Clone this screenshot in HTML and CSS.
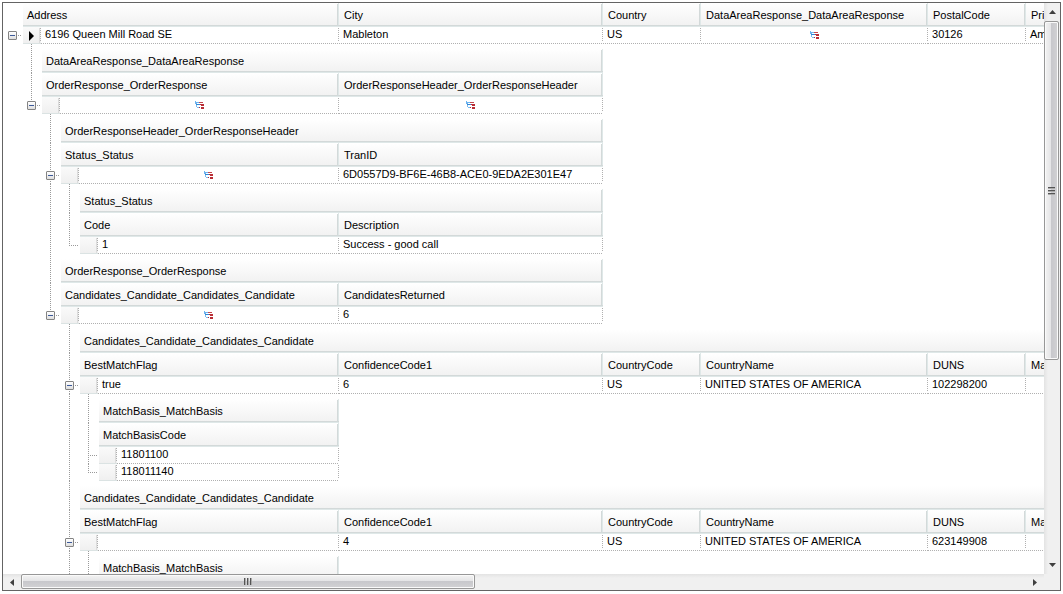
FILE: index.html
```html
<!DOCTYPE html>
<html lang="en">
<head>
    <meta charset="UTF-8">
    <title>Response data</title>
    <link rel="stylesheet" href="styles.css">
</head>
<body>
<svg width="0" height="0" class="defs" aria-hidden="true">
    <symbol id="tree" viewBox="0 0 10 9">
        <path d="M0 0h1v1h3v1H2v1H0z" fill="#6db3ee"/>
        <path d="M1 3h4v1H1z" fill="#2f86d6"/>
        <path d="M1 4h1v2h2v1H2V6H1z" fill="#7cbcf0"/>
        <path d="M4 1h1v1H4zM5 1h3v1H5z" fill="#c4484e"/>
        <path d="M5 3h4v2H6V4H5z" fill="#b92d35"/>
        <path d="M4 6h1v1H4zM6 6h3v2H6z" fill="#b92d35"/>
    </symbol>
</svg>

<div class="grid">
    <div class="view">
        <table class="band level0">
            <colgroup><col class="gut"><col class="sel"><col class="first"><col class="city"><col class="country"><col class="area"><col class="postal"><col class="more"></colgroup>
            <tr>
                <td></td>
                <th colspan="2">Address</th><th>City</th><th>Country</th><th>DataAreaResponse_DataAreaResponse</th><th>PostalCode</th><th>PrimaryAddress</th>
            </tr>
            <tr class="row">
                <td class="node"><button class="toggle" aria-label="Collapse"></button></td>
                <td class="head current"></td>
                <td>6196 Queen Mill Road SE</td><td>Mableton</td><td>US</td><td class="icon"><svg><use href="#tree"/></svg></td><td>30126</td><td>American</td>
            </tr>
            <tr>
                <td></td>
                <td class="child" colspan="7">
                    <table class="band level1">
                        <colgroup><col class="gut"><col class="sel"><col class="first"><col class="city"></colgroup>
                        <tr><td class="line"></td><td class="title" colspan="3"><div>DataAreaResponse_DataAreaResponse</div></td></tr>
                        <tr><td class="line"></td><th colspan="2">OrderResponse_OrderResponse</th><th>OrderResponseHeader_OrderResponseHeader</th></tr>
                        <tr class="row">
                            <td class="node end"><button class="toggle" aria-label="Collapse"></button></td>
                            <td class="head"></td>
                            <td class="icon"><svg><use href="#tree"/></svg></td><td class="icon"><svg><use href="#tree"/></svg></td>
                        </tr>
                        <tr>
                            <td></td>
                            <td class="child" colspan="3">
                                <table class="band level2">
                                    <colgroup><col class="gut"><col class="sel"><col class="first"><col class="city"></colgroup>
                                    <tr><td class="line"></td><td class="title" colspan="3"><div>OrderResponseHeader_OrderResponseHeader</div></td></tr>
                                    <tr><td class="line"></td><th colspan="2">Status_Status</th><th>TranID</th></tr>
                                    <tr class="row">
                                        <td class="node line"><button class="toggle" aria-label="Collapse"></button></td>
                                        <td class="head"></td>
                                        <td class="icon"><svg><use href="#tree"/></svg></td><td>6D0557D9-BF6E-46B8-ACE0-9EDA2E301E47</td>
                                    </tr>
                                    <tr>
                                        <td class="line"></td>
                                        <td class="child" colspan="3">
                                            <table class="band level3">
                                                <colgroup><col class="gut"><col class="sel"><col class="first"><col class="city"></colgroup>
                                                <tr><td class="line"></td><td class="title" colspan="3"><div>Status_Status</div></td></tr>
                                                <tr><td class="line"></td><th colspan="2">Code</th><th>Description</th></tr>
                                                <tr class="row">
                                                    <td class="node end"></td>
                                                    <td class="head"></td>
                                                    <td>1</td><td>Success - good call</td>
                                                </tr>
                                            </table>
                                        </td>
                                    </tr>
                                </table>
                                <table class="band level2">
                                    <colgroup><col class="gut"><col class="sel"><col class="first"><col class="city"></colgroup>
                                    <tr><td class="line"></td><td class="title" colspan="3"><div>OrderResponse_OrderResponse</div></td></tr>
                                    <tr><td class="line"></td><th colspan="2">Candidates_Candidate_Candidates_Candidate</th><th>CandidatesReturned</th></tr>
                                    <tr class="row">
                                        <td class="node end"><button class="toggle" aria-label="Collapse"></button></td>
                                        <td class="head"></td>
                                        <td class="icon"><svg><use href="#tree"/></svg></td><td>6</td>
                                    </tr>
                                    <tr>
                                        <td></td>
                                        <td class="child" colspan="3">
                                            <table class="band level3">
                                                <colgroup><col class="gut"><col class="sel"><col class="first"><col class="city"><col class="country"><col class="area"><col class="postal"><col class="more"></colgroup>
                                                <tr><td class="line"></td><td class="title" colspan="7"><div>Candidates_Candidate_Candidates_Candidate</div></td></tr>
                                                <tr><td class="line"></td><th colspan="2">BestMatchFlag</th><th>ConfidenceCode1</th><th>CountryCode</th><th>CountryName</th><th>DUNS</th><th>MatchBasis</th></tr>
                                                <tr class="row">
                                                    <td class="node line"><button class="toggle" aria-label="Collapse"></button></td>
                                                    <td class="head"></td>
                                                    <td>true</td><td>6</td><td>US</td><td>UNITED STATES OF AMERICA</td><td>102298200</td><td></td>
                                                </tr>
                                                <tr>
                                                    <td class="line"></td>
                                                    <td class="child" colspan="7">
                                                        <table class="band level4">
                                                            <colgroup><col class="gut"><col class="sel"><col class="first"></colgroup>
                                                            <tr><td class="line"></td><td class="title" colspan="2"><div>MatchBasis_MatchBasis</div></td></tr>
                                                            <tr><td class="line"></td><th colspan="2">MatchBasisCode</th></tr>
                                                            <tr class="row"><td class="node line"></td><td class="head"></td><td>11801100</td></tr>
                                                            <tr class="row"><td class="node end"></td><td class="head"></td><td>118011140</td></tr>
                                                        </table>
                                                    </td>
                                                </tr>
                                            </table>
                                            <table class="band level3">
                                                <colgroup><col class="gut"><col class="sel"><col class="first"><col class="city"><col class="country"><col class="area"><col class="postal"><col class="more"></colgroup>
                                                <tr><td class="line"></td><td class="title" colspan="7"><div>Candidates_Candidate_Candidates_Candidate</div></td></tr>
                                                <tr><td class="line"></td><th colspan="2">BestMatchFlag</th><th>ConfidenceCode1</th><th>CountryCode</th><th>CountryName</th><th>DUNS</th><th>MatchBasis</th></tr>
                                                <tr class="row">
                                                    <td class="node line"><button class="toggle" aria-label="Collapse"></button></td>
                                                    <td class="head"></td>
                                                    <td></td><td>4</td><td>US</td><td>UNITED STATES OF AMERICA</td><td>623149908</td><td></td>
                                                </tr>
                                                <tr>
                                                    <td class="line"></td>
                                                    <td class="child" colspan="7">
                                                        <table class="band level4">
                                                            <colgroup><col class="gut"><col class="sel"><col class="first"></colgroup>
                                                            <tr><td class="line"></td><td class="title" colspan="2"><div>MatchBasis_MatchBasis</div></td></tr>
                                                        </table>
                                                    </td>
                                                </tr>
                                            </table>
                                        </td>
                                    </tr>
                                </table>
                            </td>
                        </tr>
                    </table>
                </td>
            </tr>
        </table>
    </div>

    <div class="bar vertical">
        <button class="arrow" aria-label="Scroll up"><svg width="7" height="4"><path d="M0 4L3.500 0L7 4z"/></svg></button>
        <div class="thumb"><span class="grip"></span></div>
        <div class="track"></div>
        <button class="arrow" aria-label="Scroll down"><svg width="7" height="4"><path d="M0 0h7L3.500 4z"/></svg></button>
    </div>
    <div class="bar horizontal">
        <button class="arrow" aria-label="Scroll left"><svg width="4" height="7"><path d="M4 0v7L0 3.500z"/></svg></button>
        <div class="thumb"><span class="grip"></span></div>
        <div class="track"></div>
        <button class="arrow" aria-label="Scroll right"><svg width="4" height="7"><path d="M0 0v7L4 3.500z"/></svg></button>
    </div>
    <div class="corner"></div>
</div>
</body>
</html>
```

FILE: styles.css
```css
* { box-sizing: border-box; }
body { margin: 0; padding: 2px 2px 3px 2px; height: 100vh; background: #fff; color: #000; font: 11px/14px "Liberation Sans", Arial, sans-serif; }
button { padding: 0; border: none; background: none; }
.defs { position: absolute; }

.grid { display: grid; grid-template-columns: minmax(0, 1fr) 16px; grid-template-rows: minmax(0, 1fr) 16px; height: 100%; border: 1px solid #646464; }
.view { overflow: hidden; padding-left: 1px; }

/* bands */
.band { width: 1px; table-layout: fixed; border-collapse: separate; border-spacing: 0; }
.band td, .band th { padding: 0; white-space: nowrap; text-align: left; font-weight: normal; vertical-align: top; }
.gut { width: 19px; }
.sel { width: 18px; }
.level0 > colgroup > .first { width: 298px; }
.level1 > colgroup > .first { width: 279px; }
.level2 > colgroup > .first { width: 260px; }
.level3 > colgroup > .first { width: 241px; }
.level4 > colgroup > .first { width: 222px; }
.city { width: 264px; }
.country { width: 98px; }
.area { width: 227px; }
.postal { width: 98px; }
.more { width: 160px; }

.band th, .title div { height: 24px; line-height: 20px; background:
    linear-gradient(#dfe8e8, #dfe8e8) 0 100% / 100% 1px no-repeat,
    linear-gradient(#d3d9d9, #d3d9d9) 0 22px / 100% 1px no-repeat,
    linear-gradient(#dfe8e8, #dfe8e8) 100% 0 / 1px 100% no-repeat,
    linear-gradient(#d3d9d9, #d3d9d9) right 1px top 1px / 1px 22px no-repeat,
    linear-gradient(#fff, #f1f1f1); }
.band th { padding: 2px 0 0 4px; }
.band th + th { padding-left: 5px; }
.title div { padding: 2px 0 0 4px; }
.band .title { padding-top: 5px; }

/* rows */
.row { height: 17px; }
.band .row td { height: 17px; padding-left: 4px; background:
    repeating-linear-gradient(to right, #b0b0b0 0 1px, transparent 1px 2px) 0 100% / 100% 1px no-repeat,
    repeating-linear-gradient(#b0b0b0 0 1px, transparent 1px 2px) 100% 1px / 1px 13px no-repeat; }
.band .row .head { padding: 0; background:
    repeating-linear-gradient(#b0b0b0 0 1px, transparent 1px 2px) 100% 1px / 1px 13px no-repeat,
    linear-gradient(#dbe3e3, #dbe3e3) 0 100% / 100% 1px no-repeat,
    linear-gradient(#dcdcdc, #dcdcdc) 16px 1px / 1px 15px no-repeat,
    linear-gradient(#fafafa, #efefef); }
.band .row .current::before { content: ""; display: block; width: 0; height: 0; margin: 4px 0 0 6px; border: 5px solid transparent; border-left-color: #000; border-right-width: 0; }
.band .row .icon { padding: 4px 0 0; text-align: center; }
.icon svg { display: block; width: 10px; height: 9px; margin: 0 auto; shape-rendering: crispEdges; }

/* tree lines */
.band .line { background: repeating-linear-gradient(#9a9a9a 0 1px, transparent 1px 2px) 8px 0 / 1px 100% no-repeat; }
.band .row .node { padding: 4px 0 0 4px; background: repeating-linear-gradient(to right, #9a9a9a 0 1px, transparent 1px 2px) 8px 8px / 10px 1px no-repeat; }
.band .row .node.line, .band .row .node.end { background:
    repeating-linear-gradient(#9a9a9a 0 1px, transparent 1px 2px) 8px 0 / 1px 100% no-repeat,
    repeating-linear-gradient(to right, #9a9a9a 0 1px, transparent 1px 2px) 8px 8px / 10px 1px no-repeat; }
.band .row .node.end { background-size: 1px 9px, 10px 1px; }
.toggle { display: block; width: 9px; height: 9px; border: 1px solid #848484; border-radius: 1px; background: linear-gradient(#3c5a9a, #3c5a9a) 1px 3px / 5px 1px no-repeat, linear-gradient(#fff, #dedede); }

/* scroll bars */
.bar { display: flex; background: #ededed; }
.vertical { flex-direction: column; background: linear-gradient(to right, #e3e3e3, #f0f0f0 4px); }
.horizontal { background: linear-gradient(#e3e3e3, #f0f0f0 4px); }
.arrow { display: flex; flex: none; align-items: center; justify-content: center; width: 18px; height: 16px; }
.vertical .arrow { width: 16px; height: 18px; }
.arrow path { fill: #404040; }
.thumb { display: flex; align-items: center; justify-content: center; border: 1px solid #979797; border-radius: 2px; box-shadow: inset 0 0 0 1px #fafafa; background: linear-gradient(#f3f3f3, #e3e3e5 50%, #c8c8cc 50%, #d2d2d4); }
.vertical .thumb { width: 15px; flex: 338; background: linear-gradient(to right, #f3f3f3, #e3e3e5 50%, #c8c8cc 50%, #d2d2d4); }
.vertical .track { flex: 196; }
.horizontal .thumb { height: 15px; flex: 452; }
.horizontal .track { flex: 552; }
.grip { width: 8px; height: 7px; background: repeating-linear-gradient(to right, #555 0 1px, #aaa 1px 2px, transparent 2px 3px); }
.vertical .grip { width: 7px; height: 8px; background: repeating-linear-gradient(#555 0 1px, #aaa 1px 2px, transparent 2px 3px); }
.corner { background: #f0f0f0; }
```
